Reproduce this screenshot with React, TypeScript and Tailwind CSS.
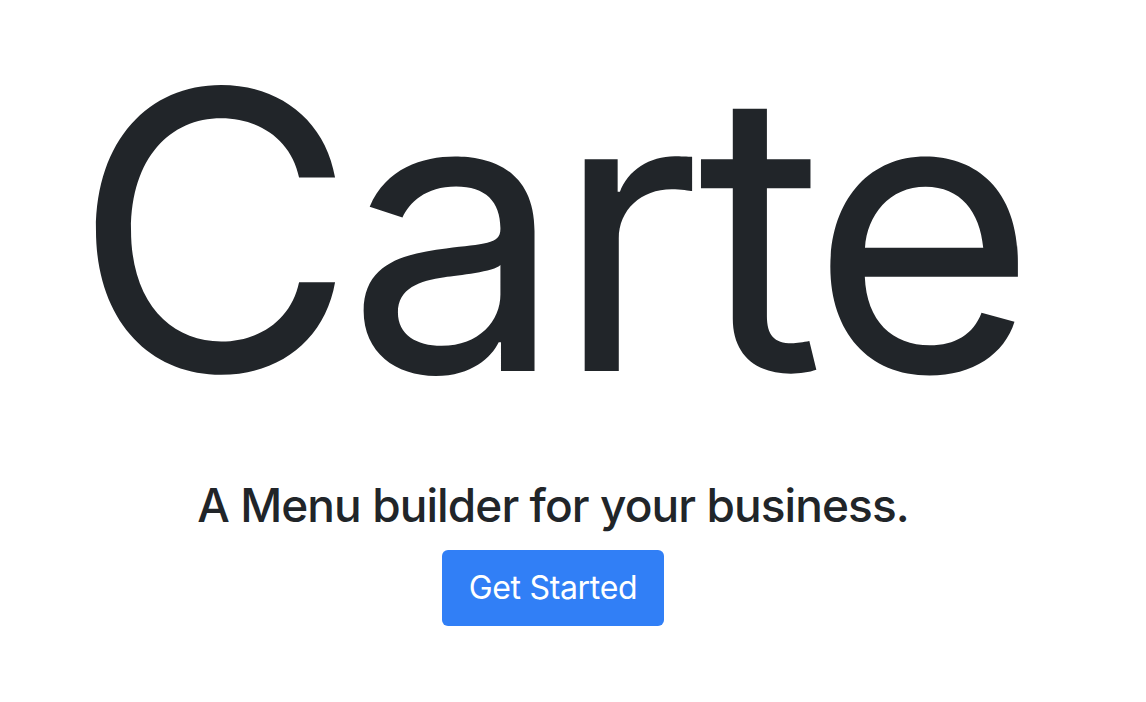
export default function App() {
  return (
    <div
      className="min-h-screen bg-white text-[#212529] pr-[40px]"
      style={{ fontFamily: "Inter, 'Liberation Sans', sans-serif" }}
    >
      <main className="flex flex-col items-center">
        <h1 className="mt-[-6px] mr-[6px] px-[8px] text-[388px] leading-[1.22] font-normal tracking-[-0.025em]">Carte</h1>
        <p className="mt-[11px] text-[46px] leading-[1.2] font-medium tracking-[-0.02em]">
          A Menu builder for your business.
        </p>
        <button className="mt-[16px] w-[222px] h-[76px] rounded-[6px] bg-[#317ff6] text-white text-[32px] tracking-[-0.01em]">
          Get Started
        </button>
      </main>
    </div>
  );
}
